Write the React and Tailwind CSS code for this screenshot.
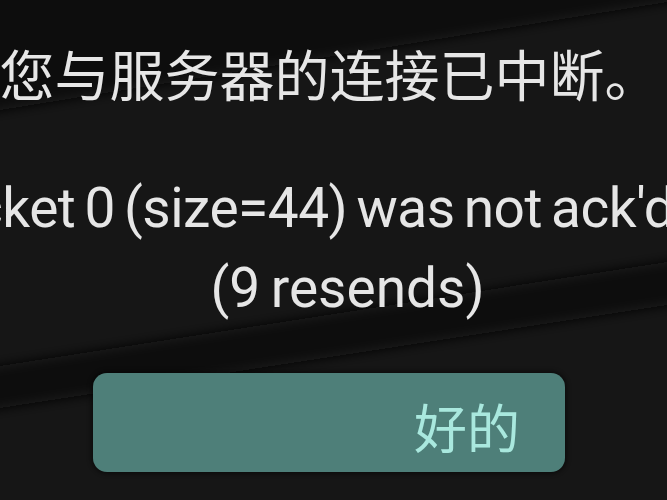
export default function App() {
  return (
    <div className="relative w-[667px] h-[500px] overflow-hidden bg-[#161616]">
      <svg
        className="absolute inset-0"
        width="667"
        height="500"
        viewBox="0 0 667 500"
      >
        <defs>
          <filter id="soft" x="-20%" y="-20%" width="140%" height="140%">
            <feGaussianBlur stdDeviation="6" />
          </filter>
        </defs>
        <polygon points="-40,-40 720,-40 720,-6 667,2 0,110 -40,116" fill="#0e0e0e" filter="url(#soft)" />
        <polygon points="-40,372 0,366 667,262 720,254 720,298 667,305 0,408 -40,414" fill="#0d0d0d" filter="url(#soft)" />
      </svg>

      <div className="relative flex flex-col pt-[44px]">
        <div className="flex justify-center pr-[8px] h-[56px] text-[55px] leading-[56px] text-[#e6e6e6] whitespace-nowrap font-['Noto_Sans_CJK_SC','Noto_Sans',sans-serif]">
          <span>您与服务器的连接已中断。</span>
        </div>

        <div className="mt-[68px] flex justify-center pl-[51px] h-[80px] text-[55px] leading-[80px] text-[#e6e6e6] font-['Roboto','Noto_Sans',sans-serif]">
          <span className="whitespace-nowrap shrink-0 [word-spacing:-4px] tracking-[-0.5px]">Reliable packet 0 (size=44) was not ack'd after 2093ms</span>
        </div>
        <div className="flex justify-center pl-[28px] h-[80px] text-[55px] leading-[80px] text-[#e6e6e6] font-['Roboto','Noto_Sans',sans-serif]">
          <span className="whitespace-nowrap shrink-0 [word-spacing:-3px]">(9 resends)</span>
        </div>

        <div className="mt-[45px] ml-[93px] w-[472px] h-[99px] rounded-[14px] bg-[#4e7f79] shadow-[0_0_4px_2px_rgba(0,0,0,0.45)] flex items-center justify-end pr-[45px]">
          <span className="text-[53px] leading-none text-[#a9e8de] font-['Noto_Sans_CJK_SC','Noto_Sans',sans-serif] mt-[8px]">好的</span>
        </div>
      </div>
    </div>
  );
}
